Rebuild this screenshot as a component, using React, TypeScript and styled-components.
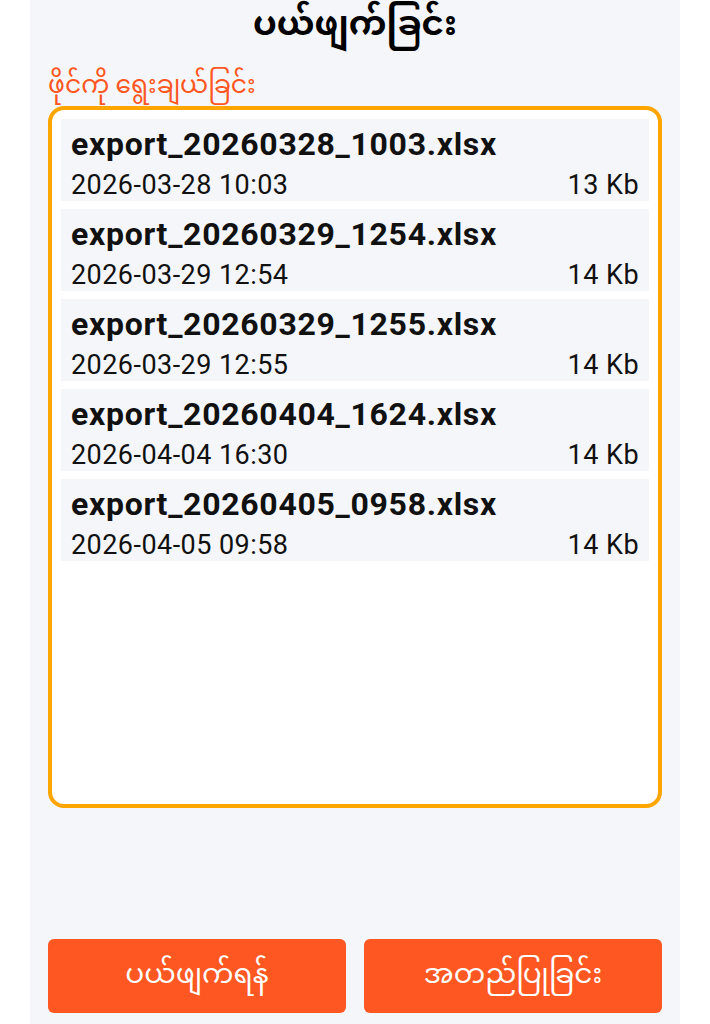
import React from 'react';
import styled, {createGlobalStyle} from 'styled-components';

const GlobalStyle = createGlobalStyle`
    * {
        box-sizing: border-box;
    }

    body {
        margin: 0;
        background: #fff;
        font-family: Roboto, "Noto Sans Myanmar", "Padauk", "Myanmar Text", sans-serif;
    }
`

type ExportFile = {
    name: string
    date: string
    size: string
}

const files: ExportFile[] = [
    {name: 'export_20260328_1003.xlsx', date: '2026-03-28 10:03', size: '13 Kb'},
    {name: 'export_20260329_1254.xlsx', date: '2026-03-29 12:54', size: '14 Kb'},
    {name: 'export_20260329_1255.xlsx', date: '2026-03-29 12:55', size: '14 Kb'},
    {name: 'export_20260404_1624.xlsx', date: '2026-04-04 16:30', size: '14 Kb'},
    {name: 'export_20260405_0958.xlsx', date: '2026-04-05 09:58', size: '14 Kb'},
];

export default function App() {
    return (
        <>
            <GlobalStyle/>
            <Screen>
                <Title>ပယ်ဖျက်ခြင်း</Title>
                <Label>ဖိုင်ကို ရွေးချယ်ခြင်း</Label>
                <FileList>
                    {files.map(file => (
                        <FileItem key={file.name}>
                            <FileName>{file.name}</FileName>
                            <FileMeta>
                                <span>{file.date}</span>
                                <span>{file.size}</span>
                            </FileMeta>
                        </FileItem>
                    ))}
                </FileList>
                <Actions>
                    <ActionButton>ပယ်ဖျက်ရန်</ActionButton>
                    <ActionButton>အတည်ပြုခြင်း</ActionButton>
                </Actions>
            </Screen>
        </>
    );
}

const Screen = styled.div`
    width: 650px;
    min-height: 1024px;
    margin: 0 30px;
    padding: 0 18px;
    background: #f5f6fa;
    display: flex;
    flex-direction: column;
`

const Title = styled.h1`
    margin: 0;
    height: 62px;
    line-height: 46px;
    text-align: center;
    font-size: 34px;
    font-weight: 700;
    color: #000;
`

const Label = styled.div`
    height: 44px;
    line-height: 46px;
    font-size: 25px;
    color: #ff5722;
`

const FileList = styled.div`
    height: 702px;
    border: 4px solid #ffa500;
    border-radius: 16px;
    background: #fff;
    padding: 9px;
    display: flex;
    flex-direction: column;
    gap: 8px;
`

const FileItem = styled.div`
    height: 82px;
    flex-shrink: 0;
    background: #f5f6fa;
    padding: 5px 10px 0;
    display: flex;
    flex-direction: column;
`

const FileName = styled.div`
    font-size: 32px;
    font-weight: 700;
    line-height: 40px;
    letter-spacing: 0.7px;
    color: #111;
`

const FileMeta = styled.div`
    display: flex;
    justify-content: space-between;
    font-size: 27px;
    line-height: 42px;
    letter-spacing: 0.45px;
    color: #111;
`

const Actions = styled.div`
    margin-top: 131px;
    display: grid;
    grid-template-columns: 1fr 1fr;
    gap: 18px;
`

const ActionButton = styled.button`
    height: 74px;
    border: none;
    border-radius: 6px;
    background: #ff5722;
    color: #fff;
    font-family: inherit;
    font-size: 28px;
`
